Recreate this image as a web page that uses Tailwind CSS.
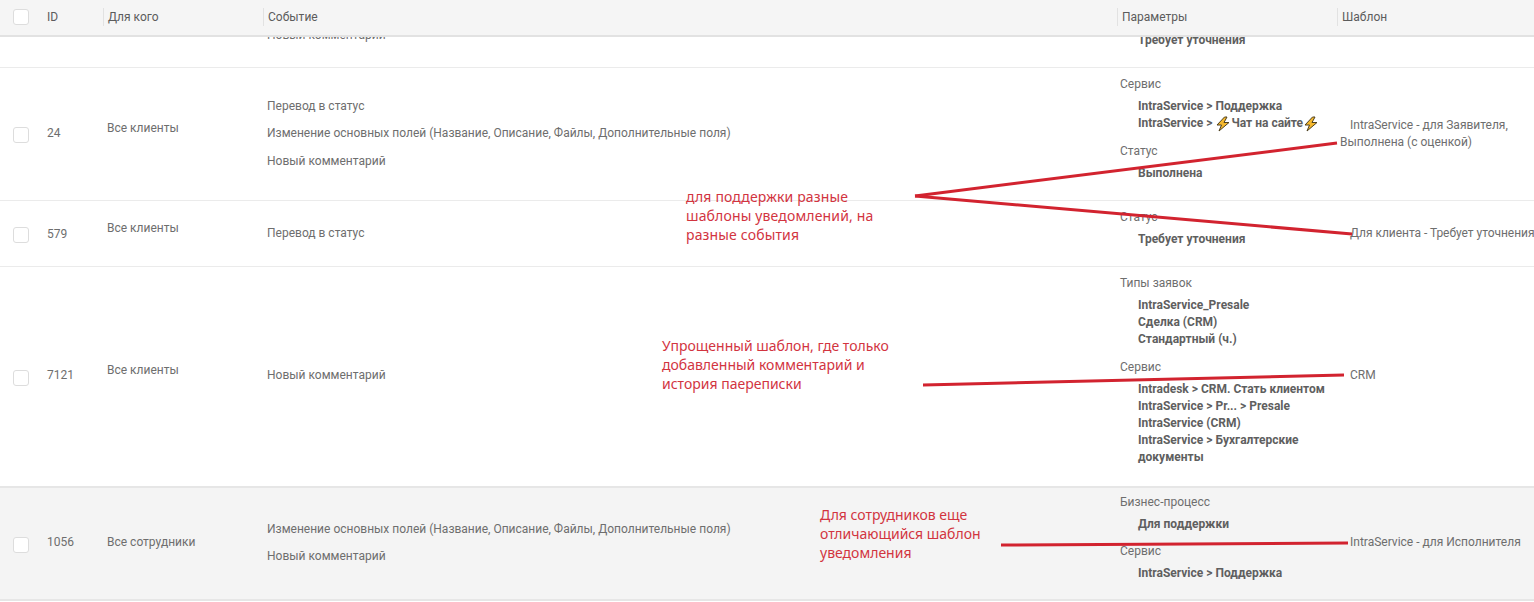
<!DOCTYPE html>
<html lang="ru">
<head>
  <meta charset="UTF-8" />
  <title>Уведомления</title>
  <script src="https://cdn.jsdelivr.net/npm/@tailwindcss/browser@4"></script>
</head>
<body class="bg-white text-[#6e6e6e] text-[12px] leading-[17px] font-['Roboto',sans-serif] overflow-hidden">
<div class="relative w-[1534px] h-[602px] overflow-hidden">

  <!-- Header -->
  <div class="relative z-10 h-[37px] bg-[#f5f5f5] border-b-2 border-[#e2e2e2] grid grid-cols-[37px_66px_160px_854px_220px_197px] text-[#5c5c5c]">
    <div class="pl-[13px] pt-[9px]"><div class="w-4 h-4 bg-white border border-[#ddd] rounded-[3px]"></div></div>
    <div class="pl-[10px] pt-[9px]">ID</div>
    <div class="mt-[8px] h-[18px] border-l border-[#e2e2e2] pl-[4px] pt-[1px]">Для кого</div>
    <div class="mt-[8px] h-[18px] border-l border-[#e2e2e2] pl-[4px] pt-[1px]">Событие</div>
    <div class="mt-[8px] h-[18px] border-l border-[#e2e2e2] pl-[4px] pt-[1px]">Параметры</div>
    <div class="mt-[8px] h-[18px] border-l border-[#e2e2e2] pl-[4px] pt-[1px]">Шаблон</div>
  </div>

  <!-- Partly scrolled row -->
  <div class="h-[31px] border-b border-[#ebebeb] grid grid-cols-[37px_66px_160px_854px_220px_197px]">
    <div></div><div></div><div></div>
    <div class="pl-[4px] -mt-[10px]">Новый комментарий</div>
    <div class="pl-[21px] -mt-[5px] font-bold text-[#5f5f5f]">Требует уточнения</div>
    <div></div>
  </div>

  <!-- 24 -->
  <div class="h-[133px] border-b border-[#ebebeb] grid grid-cols-[37px_66px_160px_854px_220px_197px]">
    <div class="pl-[13px] pt-[59px]"><div class="w-4 h-4 border border-[#ddd] rounded-[3px]"></div></div>
    <div class="pl-[10px] pt-[57px]">24</div>
    <div class="pl-[4px] pt-[52px]">Все клиенты</div>
    <div class="pl-[4px] pt-[30px]">
      <p class="mb-[10px]">Перевод в статус</p>
      <p class="mb-[11px]">Изменение основных полей (Название, Описание, Файлы, Дополнительные поля)</p>
      <p>Новый комментарий</p>
    </div>
    <div class="pl-[3px] pt-[8px]">
      <p class="mb-[5px]">Сервис</p>
      <div class="pl-[18px] font-bold text-[#5f5f5f] mb-[11px]">
        <p>IntraService &gt; Поддержка</p>
        <p class="flex items-center h-[17px]">IntraService &gt;&nbsp;<svg class="w-[16px] h-[16px] shrink-0" viewBox="0 0 16 16"><path d="M9.500 1 2 9h4.500L4 15l10-8.500H9L12 1z" fill="#f5b82e" stroke="#4e4120" stroke-width="1"/></svg>Чат на сайте<svg class="w-[16px] h-[16px] shrink-0" viewBox="0 0 16 16"><path d="M9.500 1 2 9h4.500L4 15l10-8.500H9L12 1z" fill="#f5b82e" stroke="#4e4120" stroke-width="1"/></svg></p>
      </div>
      <p class="mb-[5px]">Статус</p>
      <p class="pl-[18px] font-bold text-[#5f5f5f]">Выполнена</p>
    </div>
    <div class="pl-[3px] pt-[49px]">
      <p class="pl-[10px]">IntraService - для Заявителя,</p>
      <p>Выполнена (с оценкой)</p>
    </div>
  </div>

  <!-- 579 -->
  <div class="h-[66px] border-b border-[#ebebeb] grid grid-cols-[37px_66px_160px_854px_220px_197px]">
    <div class="pl-[13px] pt-[26px]"><div class="w-4 h-4 border border-[#ddd] rounded-[3px]"></div></div>
    <div class="pl-[10px] pt-[25px]">579</div>
    <div class="pl-[4px] pt-[19px]">Все клиенты</div>
    <div class="pl-[4px] pt-[24px]">Перевод в статус</div>
    <div class="pl-[3px] pt-[8px]">
      <p class="mb-[5px]">Статус</p>
      <p class="pl-[18px] font-bold text-[#5f5f5f]">Требует уточнения</p>
    </div>
    <div class="pl-[13px] pt-[24px] whitespace-nowrap tracking-[-0.04px]">Для клиента - Требует уточнения</div>
  </div>

  <!-- 7121 -->
  <div class="h-[219px] grid grid-cols-[37px_66px_160px_854px_220px_197px]">
    <div class="pl-[13px] pt-[103px]"><div class="w-4 h-4 border border-[#ddd] rounded-[3px]"></div></div>
    <div class="pl-[10px] pt-[100px]">7121</div>
    <div class="pl-[4px] pt-[95px]">Все клиенты</div>
    <div class="pl-[4px] pt-[100px]">Новый комментарий</div>
    <div class="pl-[3px] pt-[8px]">
      <p class="mb-[5px]">Типы заявок</p>
      <div class="pl-[18px] font-bold text-[#5f5f5f] mb-[11px]">
        <p>IntraService_Presale</p>
        <p>Сделка (CRM)</p>
        <p>Стандартный (ч.)</p>
      </div>
      <p class="mb-[5px]">Сервис</p>
      <div class="pl-[18px] font-bold text-[#5f5f5f] w-[215px]">
        <p>Intradesk &gt; CRM. Стать клиентом</p>
        <p>IntraService &gt; Pr... &gt; Presale</p>
        <p>IntraService (CRM)</p>
        <p>IntraService &gt; Бухгалтерские документы</p>
      </div>
    </div>
    <div class="pl-[13px] pt-[100px]">CRM</div>
  </div>

  <!-- 1056 -->
  <div class="h-[115px] bg-[#f4f4f4] border-t-2 border-b-2 border-[#e6e6e6] grid grid-cols-[37px_66px_160px_854px_220px_197px]">
    <div class="pl-[13px] pt-[49px]"><div class="w-4 h-4 bg-white border border-[#ddd] rounded-[3px]"></div></div>
    <div class="pl-[10px] pt-[46px]">1056</div>
    <div class="pl-[4px] pt-[46px]">Все сотрудники</div>
    <div class="pl-[4px] pt-[33px]">
      <p class="mb-[10px]">Изменение основных полей (Название, Описание, Файлы, Дополнительные поля)</p>
      <p>Новый комментарий</p>
    </div>
    <div class="pl-[3px] pt-[6px]">
      <p class="mb-[5px]">Бизнес-процесс</p>
      <p class="pl-[18px] font-bold text-[#5f5f5f] mb-[10px]">Для поддержки</p>
      <p class="mb-[5px]">Сервис</p>
      <p class="pl-[18px] font-bold text-[#5f5f5f]">IntraService &gt; Поддержка</p>
    </div>
    <div class="pl-[13px] pt-[46px] whitespace-nowrap">IntraService - для Исполнителя</div>
  </div>

  <!-- Red annotations drawn over the table -->
  <svg class="absolute inset-0 z-20 pointer-events-none" width="1534" height="602" viewBox="0 0 1534 602" fill="none" stroke="#d2232f" stroke-width="3">
    <path d="M915 196 1337 143"/>
    <path d="M915 196 1352 234"/>
    <path d="M923 385 1344 375"/>
    <path d="M1001 545 1348 543"/>
  </svg>
  <p class="absolute z-20 left-[686px] top-[187px] text-[14px] leading-[19px] tracking-[0.15px] text-[#d2343f] font-['Noto_Sans',sans-serif]">для поддержки разные<br>шаблоны уведомлений, на<br>разные события</p>
  <p class="absolute z-20 left-[662px] top-[336px] text-[14px] leading-[19px] text-[#d2343f] font-['Noto_Sans',sans-serif]">Упрощенный шаблон, где только<br>добавленный комментарий и<br>история паереписки</p>
  <p class="absolute z-20 left-[820px] top-[505px] text-[14px] leading-[19px] text-[#d2343f] font-['Noto_Sans',sans-serif]">Для сотрудников еще<br>отличающийся шаблон<br>уведомления</p>
</div>
</body>
</html>
